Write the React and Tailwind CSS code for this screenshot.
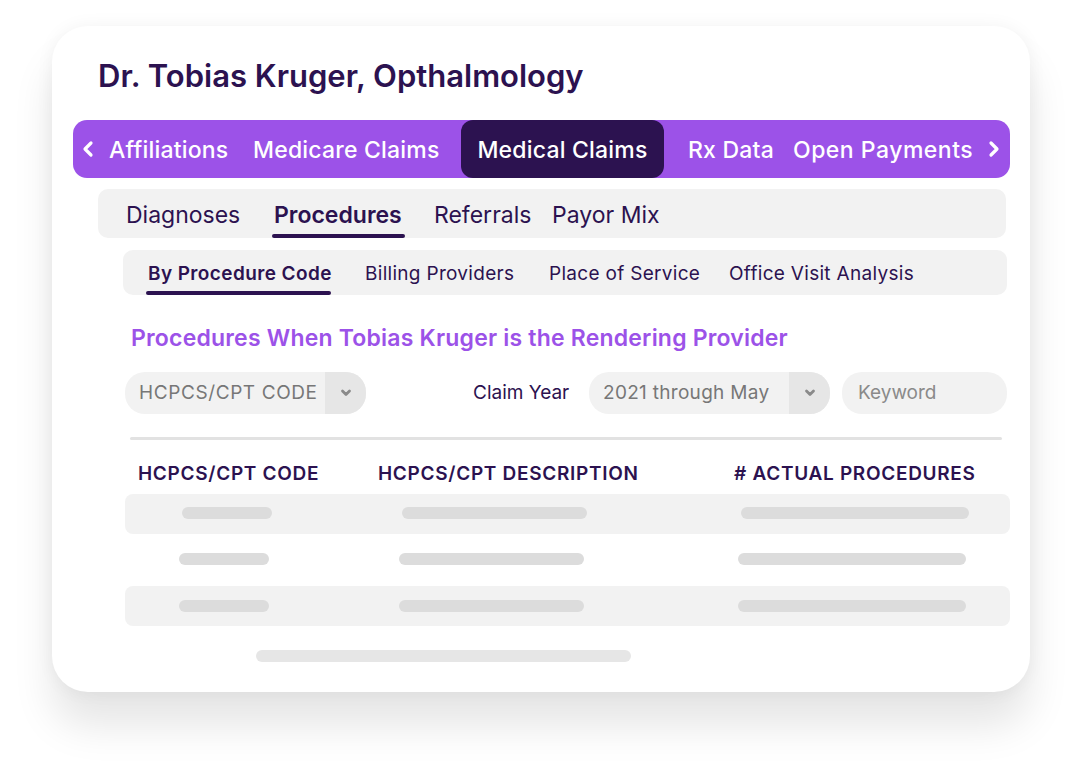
import React from "react";

const F = { fontFamily: "Inter, 'Noto Sans', sans-serif" };

function ChevLeft() {
  return (
    <svg width="14" height="18" viewBox="0 0 14 18" fill="none">
      <polyline points="10,3 4,9 10,15" stroke="white" strokeWidth="3.2" strokeLinecap="round" strokeLinejoin="round" />
    </svg>
  );
}
function ChevRight() {
  return (
    <svg width="14" height="18" viewBox="0 0 14 18" fill="none">
      <polyline points="4,3 10,9 4,15" stroke="white" strokeWidth="3.2" strokeLinecap="round" strokeLinejoin="round" />
    </svg>
  );
}
function ChevDown() {
  return (
    <svg width="12" height="8" viewBox="0 0 12 8" fill="none">
      <polyline points="2.5,2 6,5.5 9.5,2" stroke="#8a8a8a" strokeWidth="2.8" strokeLinecap="round" strokeLinejoin="round" />
    </svg>
  );
}

function Select({ label, w, track }) {
  return (
    <div className={`flex h-[42px] ${w} items-stretch overflow-hidden rounded-[20px] bg-[#f2f2f2]`}>
      <div className={`flex flex-1 items-center pl-[14px] text-[19px] text-[#777777] ${track}`}>{label}</div>
      <div className="flex w-[41px] items-center justify-center bg-[#e6e6e6]">
        <ChevDown />
      </div>
    </div>
  );
}

function Bar({ ml, w }) {
  return <div className={`h-[12px] rounded-full bg-[#dcdcdc] ${ml} ${w}`} />;
}

export default function App() {
  return (
    <div className="h-[774px] w-[1080px] bg-white pl-[52px] pt-[26px]" style={F}>
      <div className="flex h-[666px] w-[978px] flex-col rounded-[36px] bg-white shadow-[0_34px_40px_rgba(0,0,0,0.10),0_0_18px_rgba(0,0,0,0.05)]">
        {/* title */}
        <div className="ml-[46px] mt-[32px] h-[36px] text-[31px] font-semibold leading-[36px] text-[#2c1250]">
          Dr. Tobias Kruger, Opthalmology
        </div>

        {/* purple tab bar */}
        <div className="ml-[21px] mt-[26px] flex h-[58px] w-[937px] items-stretch rounded-[14px] bg-[#9c52e8] text-[23px] font-medium tracking-[0.2px] text-white">
          <div className="ml-[8px] flex w-[28px] items-center">
            <ChevLeft />
          </div>
          <div className="flex w-[144px] items-center pt-[2px]">Affiliations</div>
          <div className="flex w-[208px] items-center pt-[2px]">Medicare Claims</div>
          <div className="flex w-[203px] items-center justify-center rounded-[12px] bg-[#2c1250] pt-[2px]">Medical Claims</div>
          <div className="ml-[24px] flex w-[105px] items-center pt-[2px]">Rx Data</div>
          <div className="flex w-[194px] items-center pt-[2px] tracking-[0.5px]">Open Payments</div>
          <div className="flex items-center">
            <ChevRight />
          </div>
        </div>

        {/* second tab bar */}
        <div className="ml-[46px] mt-[11px] flex h-[49px] w-[908px] items-stretch rounded-[10px] bg-[#f2f2f2] text-[23px] text-[#2c1250]">
          <div className="ml-[28px] flex w-[148px] items-center pt-[3px]">Diagnoses</div>
          <div className="relative flex w-[160px] items-center pt-[3px] font-semibold">
            Procedures
            <div className="absolute bottom-0 left-[-2px] h-[4px] w-[133px] rounded-full bg-[#2c1250]" />
          </div>
          <div className="flex w-[118px] items-center pt-[3px]">Referrals</div>
          <div className="flex items-center pt-[3px]">Payor Mix</div>
        </div>

        {/* third tab bar */}
        <div className="ml-[71px] mt-[12px] flex h-[45px] w-[884px] items-stretch rounded-[10px] bg-[#f2f2f2] text-[19px] tracking-[0.3px] text-[#2c1250]">
          <div className="relative ml-[25px] flex w-[217px] items-center pt-[3px] font-semibold tracking-[0.4px]">
            By Procedure Code
            <div className="absolute bottom-0 left-[-2px] h-[4px] w-[185px] rounded-full bg-[#2c1250]" />
          </div>
          <div className="flex w-[184px] items-center pt-[3px]">Billing Providers</div>
          <div className="flex w-[180px] items-center pt-[3px]">Place of Service</div>
          <div className="flex items-center pt-[3px]">Office Visit Analysis</div>
        </div>

        {/* heading */}
        <div className="ml-[79px] mt-[29px] h-[28px] text-[23px] font-semibold leading-[28px] tracking-[0.2px] text-[#9c52e8]">
          Procedures When Tobias Kruger is the Rendering Provider
        </div>

        {/* filters */}
        <div className="ml-[73px] mt-[20px] flex h-[42px] items-center">
          <Select label="HCPCS/CPT CODE" w="w-[241px]" track="tracking-[0.6px]" />
          <div className="ml-[107px] w-[116px] text-[19px] text-[#2c1250]">Claim Year</div>
          <Select label="2021 through May" w="w-[241px]" track="tracking-[0.3px]" />
          <div className="ml-[12px] flex h-[42px] w-[165px] items-center rounded-[20px] bg-[#f2f2f2] pl-[16px] text-[19px] text-[#8a8a8a]">
            Keyword
          </div>
        </div>

        {/* divider */}
        <div className="ml-[78px] mt-[23px] h-[3px] w-[872px] rounded-full bg-[#e2e2e2]" />

        {/* headers */}
        <div className="ml-[73px] mt-[22px] flex h-[24px] items-center text-[19px] font-semibold leading-[24px] tracking-[0.7px] text-[#2c1250]">
          <div className="ml-[13px] w-[240px]">HCPCS/CPT CODE</div>
          <div className="w-[356px]">HCPCS/CPT DESCRIPTION</div>
          <div># ACTUAL PROCEDURES</div>
        </div>

        {/* rows */}
        <div className="ml-[73px] mt-[8px] flex w-[885px] flex-col gap-[6px]">
          <div className="flex h-[40px] items-center rounded-[8px] bg-[#f2f2f2] pb-[2px]">
            <Bar ml="ml-[57px]" w="w-[90px]" />
            <Bar ml="ml-[130px]" w="w-[185px]" />
            <Bar ml="ml-[154px]" w="w-[228px]" />
          </div>
          <div className="flex h-[40px] items-center pb-[2px]">
            <Bar ml="ml-[54px]" w="w-[90px]" />
            <Bar ml="ml-[130px]" w="w-[185px]" />
            <Bar ml="ml-[154px]" w="w-[228px]" />
          </div>
          <div className="flex h-[40px] items-center rounded-[8px] bg-[#f2f2f2]">
            <Bar ml="ml-[54px]" w="w-[90px]" />
            <Bar ml="ml-[130px]" w="w-[185px]" />
            <Bar ml="ml-[154px]" w="w-[228px]" />
          </div>
        </div>

        {/* bottom bar */}
        <div className="ml-[204px] mt-[24px] h-[12px] w-[375px] rounded-full bg-[#e6e6e6]" />
      </div>
    </div>
  );
}
